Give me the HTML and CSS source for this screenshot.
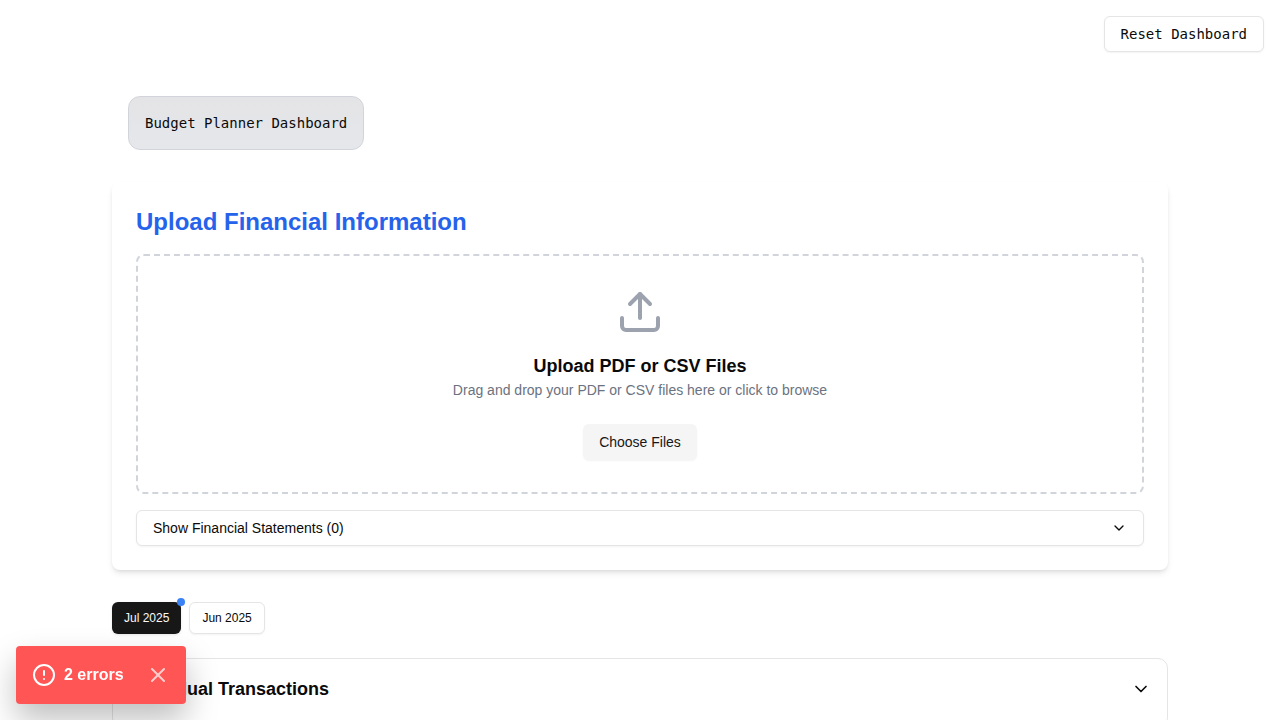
FILE: index.html
```html
<!DOCTYPE html>
<html lang="en">
<head>
<meta charset="utf-8">
<meta name="viewport" content="width=device-width, initial-scale=1">
<title>Budget Planner Dashboard</title>
<link rel="stylesheet" href="styles.css">
</head>
<body>
<header class="topbar">
  <button class="btn btn-outline mono" type="button">Reset Dashboard</button>
</header>
<main class="page">
  <h1 class="page-title mono">Budget Planner Dashboard</h1>

  <section class="upload-card">
    <h2 class="upload-heading">Upload Financial Information</h2>
    <div class="dropzone">
      <svg class="icon upload-icon" viewBox="0 0 24 24" aria-hidden="true"><path d="M21 15v4a2 2 0 0 1-2 2H5a2 2 0 0 1-2-2v-4"/><path d="M17 8l-5-5-5 5"/><path d="M12 3v12"/></svg>
      <h3 class="section-title">Upload PDF or CSV Files</h3>
      <p class="hint">Drag and drop your PDF or CSV files here or click to browse</p>
      <button class="btn btn-secondary" type="button">Choose Files</button>
    </div>
    <button class="btn btn-outline statements" type="button" aria-expanded="false">
      Show Financial Statements (0)
      <svg class="icon chevron-small" viewBox="0 0 24 24" aria-hidden="true"><path d="M6 9l6 6 6-6"/></svg>
    </button>
  </section>

  <nav class="months" aria-label="Months">
    <button class="btn btn-small btn-dark" type="button" aria-pressed="true">Jul 2025<span class="dot"></span></button>
    <button class="btn btn-small btn-outline" type="button" aria-pressed="false">Jun 2025</button>
  </nav>

  <section class="transactions">
    <button class="transactions-toggle" type="button" aria-expanded="false">
      <span class="section-title">Individual Transactions</span>
      <svg class="icon chevron" viewBox="0 0 24 24" aria-hidden="true"><path d="M6 9l6 6 6-6"/></svg>
    </button>
  </section>
</main>

<div class="toast" role="alert">
  <svg class="icon toast-icon" viewBox="0 0 24 24" aria-hidden="true"><circle cx="12" cy="12" r="10"/><path d="M12 8v4"/><path d="M12 16h.01"/></svg>
  <span>2 errors</span>
  <button class="toast-close" type="button" aria-label="Hide errors">
    <svg class="icon toast-icon" viewBox="0 0 24 24" aria-hidden="true"><path d="M18 6L6 18"/><path d="M6 6l12 12"/></svg>
  </button>
</div>
</body>
</html>
```

FILE: styles.css
```css
* { box-sizing: border-box; }

body {
  margin: 0;
  background: #fff;
  color: #0a0a0a;
  font-family: "Liberation Sans", Arial, sans-serif;
  font-size: 14px;
  line-height: 20px;
}

h1, h2, h3, p { margin: 0; }

button { font: inherit; color: inherit; cursor: pointer; }

.mono { font-family: "DejaVu Sans Mono", monospace; }

.icon {
  display: block;
  flex: none;
  fill: none;
  stroke: currentColor;
  stroke-width: 2;
  stroke-linecap: round;
  stroke-linejoin: round;
}

.btn {
  display: inline-flex;
  align-items: center;
  justify-content: center;
  height: 36px;
  padding: 0 16px;
  border: 0;
  border-radius: 6px;
  white-space: nowrap;
}

.btn-outline {
  background: #fff;
  border: 1px solid #e5e5e5;
  box-shadow: 0 1px 2px rgba(0, 0, 0, 0.05);
}

.btn-secondary {
  background: #f5f5f5;
  color: #171717;
  box-shadow: 0 1px 2px rgba(0, 0, 0, 0.05);
}

.btn-small {
  height: 32px;
  padding: 0 12px;
  font-size: 12px;
  line-height: 16px;
}

.btn-dark {
  position: relative;
  background: #171717;
  color: #fafafa;
  box-shadow: 0 1px 3px rgba(0, 0, 0, 0.1);
}

.dot {
  position: absolute;
  top: -4px;
  right: -4px;
  width: 8px;
  height: 8px;
  border-radius: 50%;
  background: #3b82f6;
}

.topbar {
  display: flex;
  justify-content: flex-end;
  padding: 16px;
}

.page {
  max-width: 1152px;
  margin: 0 auto;
  padding: 28px 48px 32px;
}

.page-title {
  width: fit-content;
  margin: 0 16px 32px;
  padding: 16px;
  border: 1px solid #d1d5db;
  border-radius: 12px;
  background: linear-gradient(#e4e4e6, #e5e7eb);
  font-size: 14px;
  font-weight: 400;
}

.upload-card {
  display: flex;
  flex-direction: column;
  gap: 16px;
  padding: 24px;
  border-radius: 8px;
  background: #fff;
  box-shadow: 0 4px 6px -1px rgba(0, 0, 0, 0.1), 0 2px 4px -2px rgba(0, 0, 0, 0.1);
}

.upload-heading {
  color: #2563eb;
  font-size: 24px;
  line-height: 32px;
}

.dropzone {
  display: flex;
  flex-direction: column;
  align-items: center;
  padding: 32px;
  border: 2px dashed #d1d5db;
  border-radius: 8px;
  text-align: center;
}

.upload-icon {
  width: 48px;
  height: 48px;
  margin-bottom: 16px;
  color: #9ca3af;
}

.section-title {
  font-size: 18px;
  font-weight: 700;
  line-height: 28px;
}

.hint {
  margin-bottom: 24px;
  color: #6b7280;
}

.statements { justify-content: space-between; }

.chevron-small { width: 16px; height: 16px; }

.chevron { width: 20px; height: 20px; }

.months {
  display: flex;
  gap: 8px;
  margin: 32px 0 24px;
}

.transactions {
  padding-bottom: 8px;
  border: 1px solid #e5e5e5;
  border-radius: 10px;
}

.transactions-toggle {
  display: flex;
  align-items: center;
  justify-content: space-between;
  width: 100%;
  padding: 16px;
  border: 0;
  background: none;
  text-align: left;
}

.toast {
  position: fixed;
  bottom: 16px;
  left: 16px;
  display: flex;
  align-items: center;
  gap: 8px;
  padding: 17px 16px;
  border-radius: 4px;
  background: #ff5555;
  color: #fff;
  font-size: 16px;
  font-weight: 700;
  line-height: 24px;
  box-shadow: 0 16px 32px rgba(0, 0, 0, 0.25);
}

.toast-icon { width: 24px; height: 24px; }

.toast-close {
  margin-left: 14px;
  padding: 0;
  border: 0;
  background: none;
  opacity: 0.7;
}
```
